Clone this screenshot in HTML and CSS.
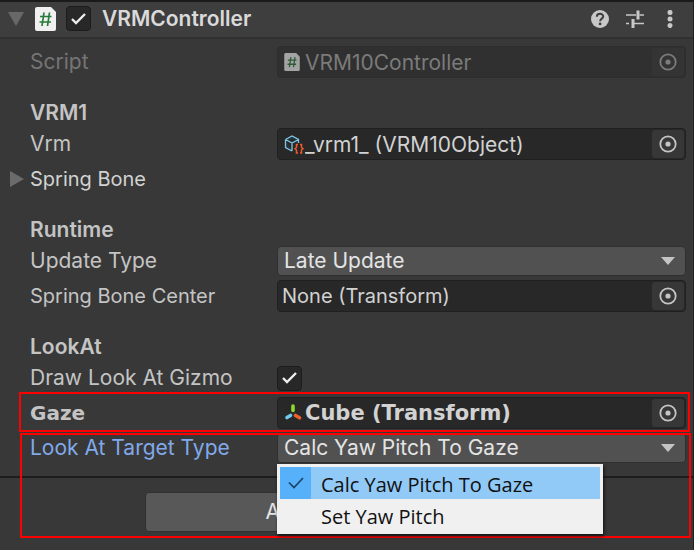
FILE: index.html
```html
<!DOCTYPE html>
<html lang="en">
<head>
<meta charset="utf-8">
<title>VRMController</title>
<link rel="stylesheet" href="styles.css">
</head>
<body>
<svg class="defs" aria-hidden="true">
  <symbol id="picker" viewBox="0 0 18 18"><circle cx="9" cy="9" r="7.7" fill="none" stroke="currentColor" stroke-width="1.8"/><circle cx="9" cy="9" r="2.6" fill="currentColor"/></symbol>
  <symbol id="script" viewBox="0 0 21 24"><path d="M2 0H16L21 5V22Q21 24 19 24H2Q0 24 0 22V2Q0 0 2 0Z" fill="#f0f0f0"/><path d="M9 5.500L7 19M14.500 5.500L12.500 19M5 9.500H16.500M4.500 15H16" fill="none" stroke="#287a38" stroke-width="1.700"/></symbol>
</svg>
<main class="inspector">
  <header class="header">
    <button class="fold" aria-label="Collapse VRMController"><svg width="16" height="14" viewBox="0 0 16 14"><path d="M0 0H16L8 14Z" fill="currentColor"/></svg></button>
    <svg class="file-icon" width="21" height="24"><use href="#script"/></svg>
    <input class="check" type="checkbox" id="enabled" checked>
    <label class="title" for="enabled">VRMController</label>
    <button class="tool" aria-label="Help"><svg width="18" height="18" viewBox="0 0 18 18"><circle cx="9" cy="9" r="9" fill="currentColor"/><path d="M5.800 6.700C5.900 3 12.200 2.900 12.200 6.500C12.200 8.600 9.100 8.700 9.100 11.300" fill="none" stroke="#3e3e3e" stroke-width="2"/><circle cx="9.100" cy="13.900" r="1.400" fill="#3e3e3e"/></svg></button>
    <button class="tool" aria-label="Presets"><svg width="18" height="18" viewBox="0 0 18 18"><path d="M0 5H10M13.500 5H18M0 13.500H3M8 13.500H18" stroke="currentColor" stroke-width="1.500"/><path d="M12 .500V9.500M7 9V18" stroke="currentColor" stroke-width="3"/></svg></button>
    <button class="tool" aria-label="More options"><svg width="18" height="18" viewBox="0 0 18 18"><g fill="currentColor"><circle cx="9" cy="2.400" r="2.500"/><circle cx="9" cy="9" r="2.500"/><circle cx="9" cy="15.600" r="2.500"/></g></svg></button>
  </header>

  <form class="properties">
    <div class="row disabled">
      <label for="script-field">Script</label>
      <div class="object">
        <svg class="script-small" width="16" height="18" viewBox="0 0 21 24"><use href="#script"/></svg>
        <input id="script-field" type="text" value="VRM10Controller" disabled>
        <button type="button" class="pick" aria-label="Select script" disabled><svg width="18" height="18"><use href="#picker"/></svg></button>
      </div>
    </div>

    <h2>VRM1</h2>
    <div class="row">
      <label for="vrm">Vrm</label>
      <div class="object">
        <svg width="20" height="20" viewBox="0 0 20 20"><path d="M1.500 5.500L8 2L14.500 5.500V9M1.500 5.500V13.500L8 17M1.500 5.500L8 9L14.500 5.500M8 9V17" fill="#203642" stroke="#83c5df" stroke-width="1.300"/><path d="M14 10.500H12.500V13.500L11 14.700L12.500 16V19H14M16 10.500H17.500V13.500L19 14.700L17.500 16V19H16" fill="none" stroke="#f1582b" stroke-width="1.500"/></svg>
        <input id="vrm" type="text" value="_vrm1_ (VRM10Object)" readonly>
        <button type="button" class="pick" aria-label="Select Vrm"><svg width="18" height="18"><use href="#picker"/></svg></button>
      </div>
    </div>
    <div class="row bone">
      <button type="button" class="foldout"><svg width="14" height="16" viewBox="0 0 14 16"><path d="M0 0L14 8L0 16Z" fill="#6b6b6b"/></svg>Spring Bone</button>
    </div>

    <h2>Runtime</h2>
    <div class="row">
      <label for="update">Update Type</label>
      <div class="dropdown">
        <select id="update"><option>Late Update</option></select>
        <svg class="arrow" width="14" height="8" viewBox="0 0 14 8"><path d="M0 0H14L7 8Z" fill="currentColor"/></svg>
      </div>
    </div>
    <div class="row bone-center">
      <label for="center">Spring Bone Center</label>
      <div class="object">
        <input id="center" type="text" value="None (Transform)" readonly>
        <button type="button" class="pick" aria-label="Select Spring Bone Center"><svg width="18" height="18"><use href="#picker"/></svg></button>
      </div>
    </div>

    <h2>LookAt</h2>
    <div class="row">
      <label for="gizmo">Draw Look At Gizmo</label>
      <input class="check" type="checkbox" id="gizmo" checked>
    </div>
    <div class="row gaze">
      <label for="gaze">Gaze</label>
      <div class="object">
        <svg width="20" height="20" viewBox="0 0 20 20"><g stroke-width="3.600" stroke-linecap="round"><path d="M9 3V7.500" stroke="#8fd92f"/><path d="M6.500 12.500L3 14.500" stroke="#72c9ef"/><path d="M11.500 12.500L15.500 14.800" stroke="#f0602f"/></g></svg>
        <input id="gaze" type="text" value="Cube (Transform)" readonly>
        <button type="button" class="pick" aria-label="Select Gaze"><svg width="18" height="18"><use href="#picker"/></svg></button>
      </div>
    </div>
    <div class="row target">
      <label for="target">Look At Target Type</label>
      <div class="dropdown">
        <select id="target"><option>Calc Yaw Pitch To Gaze</option><option>Set Yaw Pitch</option></select>
        <svg class="arrow" width="14" height="8" viewBox="0 0 14 8"><path d="M0 0H14L7 8Z" fill="currentColor"/></svg>
        <ul class="menu" role="listbox" aria-label="Look At Target Type">
          <li role="option" aria-selected="true"><span class="mark"><svg width="16" height="12" viewBox="0 0 16 12"><path d="M1 5.500L6 10.500L15 1" fill="none" stroke="#1d4264" stroke-width="1.700"/></svg></span>Calc Yaw Pitch To Gaze</li>
          <li role="option" aria-selected="false"><span class="mark"></span>Set Yaw Pitch</li>
        </ul>
      </div>
    </div>
  </form>

  <footer class="footer"><button class="add">Add Component</button></footer>
</main>
</body>
</html>
```
FILE: styles.css
```css
* { box-sizing: border-box; }
body { margin: 0; background: #383838; color: #c4c4c4; font: 21px/24px Inter, sans-serif; }
button, input, select { font: inherit; color: inherit; }
button { border: 0; padding: 0; background: none; }
svg { display: block; flex: none; }
.defs { position: absolute; width: 0; height: 0; }

.inspector { min-height: 100vh; border-top: 2px solid #1a1a1a; border-right: 1px solid #202020; }

.header { display: flex; align-items: center; height: 37px; padding: 0 13px 2px 8px; background: #3e3e3e; border-bottom: 2px solid #303030; }
.fold { color: #686868; }
.file-icon { margin: 0 10px 0 11px; }
.title { flex: 1; margin-left: 11px; color: #dadada; font-weight: 600; }
.tool { margin-left: 17px; color: #c8c8c8; }
.tool:last-child { margin-right: 1px; }

.check {
  appearance: none; width: 25px; height: 25px; margin: 0;
  border: 1px solid #1c1c1c; border-radius: 4px;
  background: #282828 url("data:image/svg+xml,%3Csvg xmlns='http://www.w3.org/2000/svg' viewBox='0 0 15 12'%3E%3Cpath d='M1 6L5 10L14 1' fill='none' stroke='%23eee' stroke-width='2.400'/%3E%3C/svg%3E") center / 15px 12px no-repeat;
}

.properties { display: grid; gap: 3px; padding: 7px 7px 12px 30px; border-bottom: 2px solid #1c1c1c; }
.row { position: relative; display: grid; grid-template-columns: 247px minmax(0, 1fr); align-items: center; height: 32px; }
h2 { height: 44px; margin: 0; padding-top: 20px; font-size: 21px; line-height: 24px; font-weight: 600; }

.object { display: flex; align-items: center; height: 32px; padding-left: 6px; border: 1px solid #202020; border-radius: 4px; background: #282828; color: #d2d2d2; }
.object input { flex: 1; min-width: 0; height: 30px; padding: 0; border: 0; outline: 0; background: none; }
.object svg + input { padding-left: 1px; }
.object .script-small { margin-right: 4px; }
.object input:first-child { margin-left: -2px; }
.pick { display: grid; place-items: center; width: 32px; height: 28px; margin-right: 1px; border-radius: 3px; background: #373737; color: #c4c4c4; }
.disabled { color: #757575; }
.disabled .object { border-color: #2d2d2d; background: #303030; color: #7b7b7b; }
.disabled .script-small { opacity: .6; }
.disabled .pick { background: #343434; color: #7b7b7b; }

.bone { color: #d2d2d2; }
.bone, .bone-center { font-size: 20px; }
.foldout { display: flex; align-items: center; gap: 6px; margin-left: -20px; }

.dropdown { position: relative; }
.dropdown select { display: block; appearance: none; width: 100%; height: 30px; padding: 0 32px 0 6px; border: 1px solid #303030; border-radius: 4px; outline: 0; background: #515151; color: #e4e4e4; line-height: 24px; }
.arrow { position: absolute; top: 11px; right: 11px; color: #c4c4c4; pointer-events: none; }

.gaze { font-family: "DejaVu Sans", Verdana, sans-serif; font-weight: 700; }
.gaze label { font-size: 20px; }
.gaze::after, .target::after { content: ""; position: absolute; border: 2px solid #f00; pointer-events: none; }
.gaze::after { inset: -5px -4px -3px -11px; }
.target::after { inset: 1px -5px -74px -10px; }
.target label { color: #81a9ea; }

.menu { position: absolute; z-index: 1; top: 31px; left: 0; width: 326px; margin: 0; padding: 3px; list-style: none; background: #f0f0f0; color: #111; box-shadow: 1px 2px 3px #111; font-family: "Open Sans", "Segoe UI", sans-serif; font-size: 20px; line-height: 35px; }
.menu li { display: flex; align-items: flex-start; height: 32px; }
.menu [aria-selected="true"] { background: #91c9f7; }
.mark { display: grid; place-items: center; width: 31px; height: 32px; margin-right: 10px; }
[aria-selected="true"] .mark { background: #56b0fa; }

.footer { display: flex; justify-content: center; padding: 14px 0; }
.add { width: 404px; max-width: 80%; height: 40px; border: 1px solid #303030; border-radius: 4px; background: #585858; color: #e4e4e4; }
```
